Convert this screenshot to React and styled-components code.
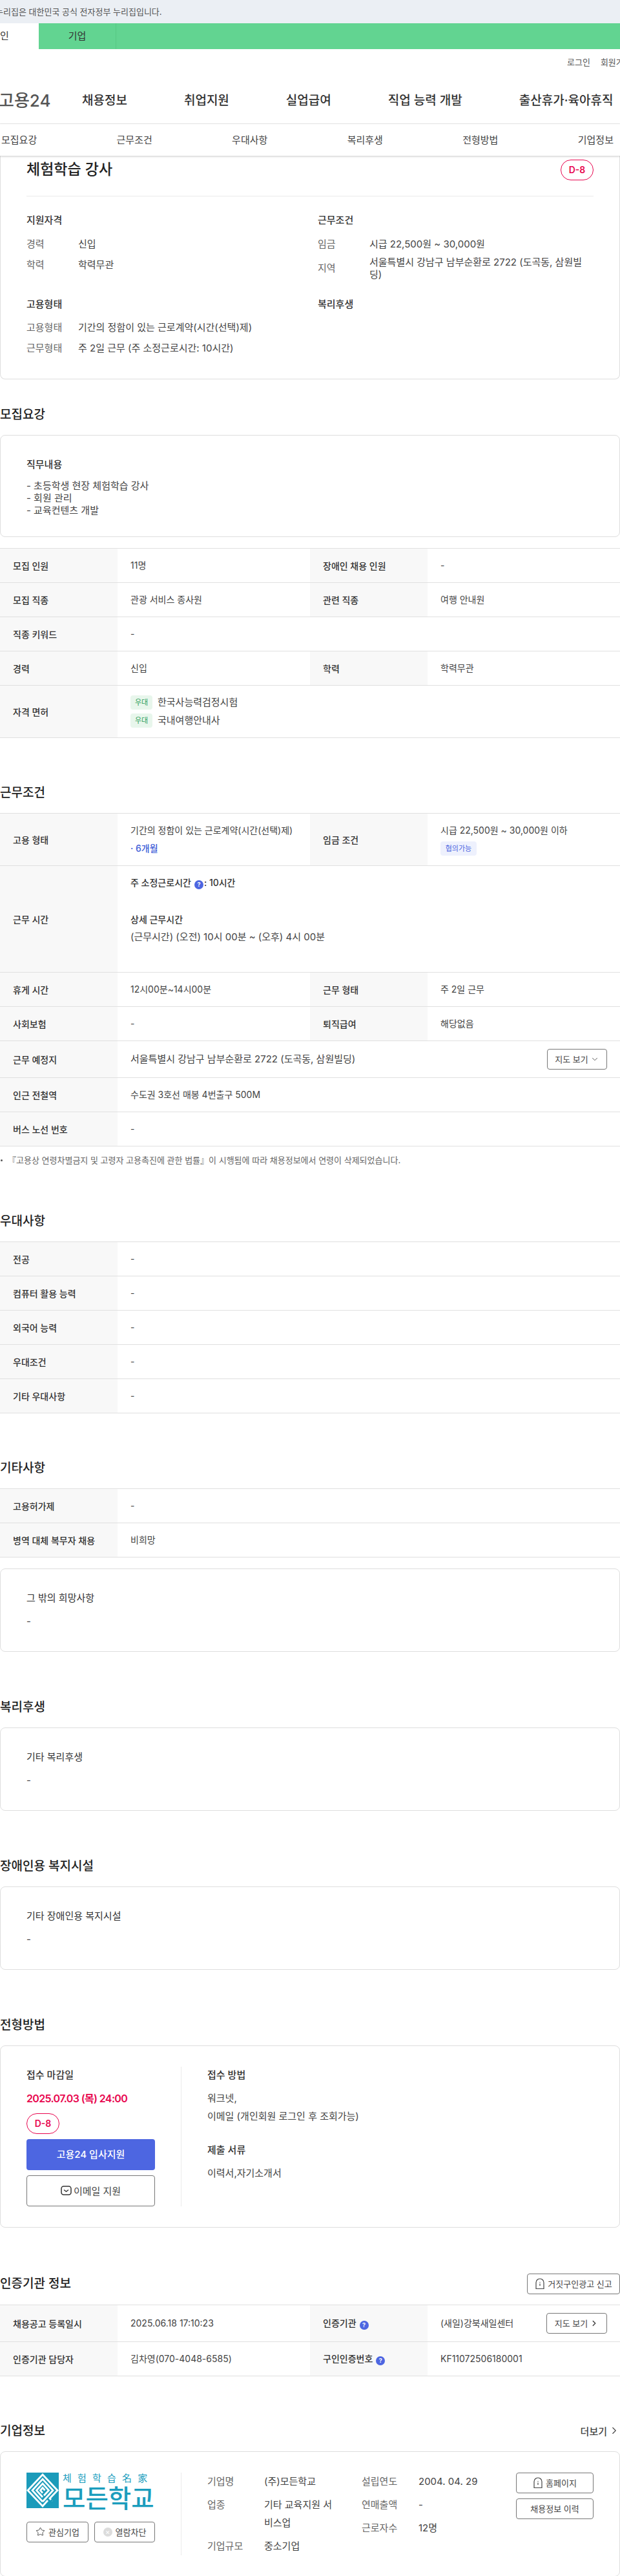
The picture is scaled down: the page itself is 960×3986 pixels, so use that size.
import React from 'react';
import styled, { createGlobalStyle } from 'styled-components';
import { ChevronDown, ChevronRight, Star } from 'lucide-react';

const GlobalStyle = createGlobalStyle`
  html, body {
    margin: 0;
    padding: 0;
    background: #fff;
  }
  body {
    font-family: Inter, "Noto Sans CJK KR", sans-serif;
    color: #444;
  }
  * { box-sizing: border-box; }
`;

const Page = styled.div`
  width: 960px;
  height: 3986px;
  overflow: hidden;
`;

const GovBanner = styled.div`
  height: 36px;
  line-height: 36px;
  background: #ebeff4;
  font-size: 13px;
  color: #555;
  white-space: nowrap;
  text-indent: -7px;
`;

const EnvBar = styled.div`
  display: flex;
  height: 40px;
  background: #62d491;
`;

const EnvTab = styled.div`
  width: 120px;
  margin-left: ${p => (p.$active ? '-60px' : '0')};
  background: ${p => (p.$active ? '#fff' : 'transparent')};
  border-right: ${p => (p.$active ? '0' : '1px solid #57c884')};
  color: #333;
  font-size: 15px;
  line-height: 40px;
  text-align: center;
`;

const UtilRow = styled.div`
  display: flex;
  gap: 16px;
  height: 40px;
  padding: 10px 0 0 878px;
  font-size: 13px;
  line-height: 20px;
  color: #555;
  white-space: nowrap;
`;

const MainNav = styled.div`
  display: flex;
  align-items: center;
  height: 76px;
  border-bottom: 1px solid #ececec;
  white-space: nowrap;
`;

const Logo = styled.div`
  width: 127px;
  margin: 0 2px 0 -2px;
  flex: none;
  font-size: 26px;
  font-weight: 500;
  color: #555;
`;

const NavItems = styled.div`
  display: flex;
  gap: 88px;
`;

const NavItem = styled.div`
  font-size: 19px;
  font-weight: 500;
  color: #333;
`;

const SubTabs = styled.div`
  position: relative;
  z-index: 2;
  display: flex;
  justify-content: space-between;
  height: 49px;
  padding: 0 10px 0 2px;
  background: #fff;
  box-shadow: 0 1px 3px rgba(0, 0, 0, 0.22);
  font-size: 15px;
  line-height: 49px;
  color: #444;
`;

const Card = styled.div`
  border: 1px solid #dedede;
  border-radius: 8px;
  background: #fff;
  margin-top: ${p => p.$top || 0}px;
`;

const SummaryCard = styled(Card)`
  border-top: 0;
  border-radius: 0 0 8px 8px;
  height: 346px;
  padding: 6px 40px 0;
`;

const TitleRow = styled.div`
  display: flex;
  justify-content: space-between;
  align-items: flex-start;
  height: 57px;
  border-bottom: 1px solid #ebebeb;
`;

const JobTitle = styled.h1`
  margin: 0;
  font-size: 23px;
  line-height: 30px;
  font-weight: 500;
  color: #222;
`;

const DdayBadge = styled.div`
  width: 51px;
  height: 32px;
  border: 1px solid #e8064f;
  border-radius: 16px;
  color: #e8064f;
  font-size: 14px;
  font-weight: 600;
  line-height: 30px;
  text-align: center;
`;

const SummaryGrid = styled.div`
  display: grid;
  grid-template-columns: 451px 427px;
  row-gap: 26px;
  padding-top: 27px;
`;

const GroupTitle = styled.div`
  font-size: 15px;
  line-height: 20px;
  font-weight: 500;
  color: #333;
  margin-bottom: 14px;
`;

const SummaryRows = styled.div`
  display: flex;
  flex-direction: column;
  gap: 6px;
`;

const SummaryRow = styled.div`
  display: flex;
  align-items: center;
  min-height: 26px;
  font-size: 15px;
  line-height: 18.75px;
`;

const SummaryLabel = styled.div`
  width: 80px;
  flex: none;
  color: #666;
`;

const SummaryValue = styled.div`
  flex: 1;
  color: #444;
`;

const SectionHead = styled.div`
  display: flex;
  justify-content: space-between;
  align-items: center;
  margin-top: ${p => p.$top}px;
  margin-bottom: ${p => p.$bottom || 18}px;
  min-height: 27px;
`;

const SectionTitle = styled.h2`
  margin: 0;
  font-size: 19px;
  line-height: 27px;
  font-weight: 500;
  color: #222;
`;

const DetailCard = styled(Card)`
  padding: 35px 40px ${p => (p.$tight ? 31 : 36)}px;
`;

const DetailHeading = styled.div`
  font-size: 15px;
  line-height: 20px;
  font-weight: ${p => (p.$strong ? 500 : 400)};
  color: #333;
`;

const DetailBody = styled.div`
  margin-top: ${p => (p.$tight ? 14 : 17)}px;
  font-size: 15px;
  line-height: 18.75px;
  color: #444;
  white-space: pre-line;
`;

const Table = styled.table`
  width: 960px;
  table-layout: fixed;
  border-collapse: collapse;
  border-top: 1px solid #e0e0e0;
  font-size: 14px;
  margin-top: ${p => p.$top || 0}px;
`;

const Th = styled.th`
  padding: 0 20px;
  background: #f8f8f8;
  font-weight: 500;
  color: #333;
  text-align: left;
  border-bottom: 1px solid #e0e0e0;
`;

const Td = styled.td`
  padding: 0 20px;
  color: #444;
  line-height: 20px;
  border-bottom: 1px solid #e0e0e0;
`;

const Tr = styled.tr`
  height: ${p => p.$h || 53}px;
`;

const ColHead = styled.col`
  width: 182px;
`;

const ColBody = styled.col`
  width: 298px;
`;

const Licence = styled.div`
  display: flex;
  align-items: center;
  gap: 8px;
  height: 22px;
  font-size: 15px;
  & + & {
    margin-top: 6px;
  }
`;

const GreenTag = styled.span`
  width: 34px;
  height: 22px;
  border-radius: 4px;
  background: #e8f6ec;
  color: #2f9e5a;
  font-size: 11px;
  line-height: 22px;
  text-align: center;
`;

const CellLine = styled.div`
  font-size: ${p => p.$size || 14}px;
  line-height: 20px;
  margin-top: ${p => p.$top || 0}px;
  margin-bottom: ${p => p.$bottom || 0}px;
`;

const PeriodLine = styled.div`
  margin-top: 8px;
  font-size: 14px;
  font-weight: 500;
  color: #4160d8;
`;

const BlueTag = styled.span`
  display: inline-block;
  margin-top: 7px;
  width: 56px;
  height: 22px;
  border-radius: 4px;
  background: #eef1fd;
  color: #4d66e1;
  font-size: 11px;
  line-height: 22px;
  text-align: center;
`;

const HelpDot = styled.span`
  display: inline-block;
  width: 14px;
  height: 14px;
  margin: 0 1px 0 5px;
  border-radius: 50%;
  background: #4d66e1;
  color: #fff;
  font-size: 9px;
  font-weight: 700;
  line-height: 14px;
  text-align: center;
  vertical-align: -1px;
`;

const StrongLine = styled.div`
  font-weight: 500;
  color: #333;
  line-height: 20px;
  margin-top: ${p => p.$top || 0}px;
`;

const BetweenCell = styled.div`
  display: flex;
  justify-content: space-between;
  align-items: center;
  font-size: ${p => p.$size || 14}px;
`;

const OutlineButton = styled.div`
  display: inline-flex;
  align-items: center;
  justify-content: center;
  gap: ${p => p.$gap || 3}px;
  flex: none;
  width: ${p => p.$w}px;
  height: 32px;
  border: 1px solid #777;
  border-radius: 4px;
  background: #fff;
  color: #444;
  font-size: 13px;
  white-space: nowrap;
`;

const NoteLine = styled.div`
  position: relative;
  margin-top: 11px;
  padding-left: 12px;
  font-size: 13px;
  line-height: 20px;
  color: #666;
  &::before {
    content: '';
    position: absolute;
    left: 1px;
    top: 9px;
    width: 3px;
    height: 3px;
    border-radius: 50%;
    background: #555;
  }
`;

const ApplyCard = styled(Card)`
  display: flex;
  height: 282px;
  padding: 32px 40px 0;
`;

const DeadlineCol = styled.div`
  width: 199px;
  padding-top: 3px;
`;

const Divider = styled.div`
  width: 1px;
  height: ${p => p.$h}px;
  margin: 0 40px;
  background: #ebebeb;
  flex: none;
`;

const ColHeading = styled.div`
  font-size: 15px;
  font-weight: 500;
  line-height: 20px;
  color: #333;
  margin-top: ${p => p.$top || 0}px;
`;

const DeadlineDate = styled.div`
  margin-top: 16px;
  margin-bottom: 13px;
  font-size: 16px;
  font-weight: 600;
  line-height: 20px;
  color: #e8064f;
  letter-spacing: -0.04em;
  white-space: nowrap;
`;

const ApplyButton = styled.div`
  height: 48px;
  margin-top: 8px;
  border-radius: 4px;
  background: #4d66e1;
  color: #fff;
  font-size: 15px;
  font-weight: 500;
  line-height: 48px;
  text-align: center;
`;

const EmailButton = styled.div`
  display: flex;
  align-items: center;
  justify-content: center;
  gap: 3px;
  height: 48px;
  margin-top: 8px;
  border: 1px solid #777;
  border-radius: 4px;
  color: #444;
  font-size: 15px;
`;

const MethodCol = styled.div`
  padding-top: 3px;
  flex: 1;
`;

const MethodText = styled.div`
  margin-top: 12px;
  font-size: 15px;
  line-height: 28px;
  color: #444;
  white-space: pre-line;
`;

const MoreLink = styled.div`
  display: flex;
  align-items: center;
  gap: 2px;
  font-size: 15px;
  font-weight: 500;
  color: #444;
`;

const CompanyCard = styled(Card)`
  display: flex;
  height: 194px;
  padding: 32px 40px 0;
`;

const LogoCol = styled.div`
  width: 199px;
  flex: none;
`;

const LogoRow = styled.div`
  display: flex;
  gap: 6px;
  height: 63px;
`;

const LogoWords = styled.div`
  display: flex;
  flex-direction: column;
  color: #1b9dbd;
  white-space: nowrap;
`;

const LogoSlogan = styled.div`
  font-size: 15px;
  line-height: 17px;
  letter-spacing: 9.2px;
`;

const LogoName = styled.div`
  font-size: 38.5px;
  line-height: 46px;
  font-weight: 500;
`;

const FavRow = styled.div`
  display: flex;
  justify-content: space-between;
  margin-top: 13px;
`;

const BlockIcon = styled.span`
  width: 14px;
  height: 14px;
  border-radius: 50%;
  background: #dcdcdc;
  color: #fff;
  font-size: 11px;
  line-height: 14px;
  text-align: center;
`;

const InfoCols = styled.div`
  display: flex;
  width: 478px;
`;

const InfoCol = styled.div`
  display: flex;
  flex-direction: column;
  gap: 8px;
  width: ${p => p.$w}px;
  flex: none;
`;

const InfoItem = styled.div`
  display: flex;
  font-size: 15px;
  line-height: 28px;
`;

const InfoLabel = styled.div`
  width: 88px;
  flex: none;
  color: #666;
`;

const InfoValue = styled.div`
  width: 115px;
  color: #444;
`;

const SideButtons = styled.div`
  display: flex;
  flex-direction: column;
  gap: 8px;
`;

const BadgeIcon = () => (
  <svg width="16" height="18" viewBox="0 0 16 18" fill="none" stroke="#444" strokeWidth="1.2">
    <path d="M2 16.5V7a6 6 0 0 1 12 0v9.5Z" />
    <path d="M8 8.5v3.5" />
    <path d="M8 6v1" />
  </svg>
);

const EmailIcon = () => (
  <svg width="17" height="15" viewBox="0 0 17 15" fill="none" stroke="#333" strokeWidth="1.5">
    <rect x="1" y="1" width="15" height="13" rx="3.5" />
    <path d="M5 6.5l3.5 2.5 3.5-2.5" />
  </svg>
);

const LogoMark = () => (
  <svg width="50" height="55" viewBox="0 0 50 55">
    <rect width="50" height="55" fill="#1b9bba" />
    <path
      d="M33 43 L25 52 L2 27.5 L25 3 L48 27.5 L36 40 L40 44
         M25 45 L9 27.5 L25 10 L41 27.5 L25 45
         M25 38 L15.5 27.5 L25 17 L34.5 27.5 L27 35.5
         M25 31.5 L21.5 27.5 L25 23.5 L28.5 27.5"
      fill="none"
      stroke="#fff"
      strokeWidth="2.8"
    />
    <path d="M36 46 L43 39" stroke="#1b9bba" strokeWidth="3" />
  </svg>
);

const navItems = ['채용정보', '취업지원', '실업급여', '직업 능력 개발', '출산휴가·육아휴직'];
const tabs = ['모집요강', '근무조건', '우대사항', '복리후생', '전형방법', '기업정보'];

const TableCols = () => (
  <colgroup>
    <ColHead />
    <ColBody />
    <ColHead />
    <ColBody />
  </colgroup>
);

const SummaryBlock = ({ title, rows }) => (
  <div>
    <GroupTitle>{title}</GroupTitle>
    <SummaryRows>
      {rows.map(([label, value]) => (
        <SummaryRow key={label}>
          <SummaryLabel>{label}</SummaryLabel>
          <SummaryValue>{value}</SummaryValue>
        </SummaryRow>
      ))}
    </SummaryRows>
  </div>
);

const SimpleTable = ({ rows }) => (
  <Table>
    <TableCols />
    <tbody>
      {rows.map(([label, value]) => (
        <Tr key={label}>
          <Th>{label}</Th>
          <Td colSpan={3}>{value}</Td>
        </Tr>
      ))}
    </tbody>
  </Table>
);

export default function App() {
  return (
    <Page>
      <GlobalStyle />
      <GovBanner>누리집은 대한민국 공식 전자정부 누리집입니다.</GovBanner>
      <EnvBar>
        <EnvTab $active>개인</EnvTab>
        <EnvTab>기업</EnvTab>
      </EnvBar>
      <UtilRow>
        <span>로그인</span>
        <span>회원가입</span>
      </UtilRow>
      <MainNav>
        <Logo>고용24</Logo>
        <NavItems>
          {navItems.map(item => (
            <NavItem key={item}>{item}</NavItem>
          ))}
        </NavItems>
      </MainNav>
      <SubTabs>
        {tabs.map(tab => (
          <span key={tab}>{tab}</span>
        ))}
      </SubTabs>

      <SummaryCard>
        <TitleRow>
          <JobTitle>체험학습 강사</JobTitle>
          <DdayBadge>D-8</DdayBadge>
        </TitleRow>
        <SummaryGrid>
          <SummaryBlock title="지원자격" rows={[['경력', '신입'], ['학력', '학력무관']]} />
          <SummaryBlock
            title="근무조건"
            rows={[
              ['임금', '시급 22,500원 ~ 30,000원'],
              ['지역', '서울특별시 강남구 남부순환로 2722 (도곡동, 삼원빌딩)'],
            ]}
          />
          <SummaryBlock
            title="고용형태"
            rows={[
              ['고용형태', '기간의 정함이 있는 근로계약(시간(선택)제)'],
              ['근무형태', '주 2일 근무 (주 소정근로시간: 10시간)'],
            ]}
          />
          <SummaryBlock title="복리후생" rows={[]} />
        </SummaryGrid>
      </SummaryCard>

      <SectionHead $top={41}>
        <SectionTitle>모집요강</SectionTitle>
      </SectionHead>
      <DetailCard $tight>
        <DetailHeading $strong>직무내용</DetailHeading>
        <DetailBody $tight>{'- 초등학생 현장 체험학습 강사\n- 회원 관리\n- 교육컨텐츠 개발'}</DetailBody>
      </DetailCard>

      <Table $top={17}>
        <TableCols />
        <tbody>
          <Tr>
            <Th>모집 인원</Th>
            <Td>11명</Td>
            <Th>장애인 채용 인원</Th>
            <Td>-</Td>
          </Tr>
          <Tr>
            <Th>모집 직종</Th>
            <Td>관광 서비스 종사원</Td>
            <Th>관련 직종</Th>
            <Td>여행 안내원</Td>
          </Tr>
          <Tr>
            <Th>직종 키워드</Th>
            <Td colSpan={3}>-</Td>
          </Tr>
          <Tr>
            <Th>경력</Th>
            <Td>신입</Td>
            <Th>학력</Th>
            <Td>학력무관</Td>
          </Tr>
          <Tr $h={81}>
            <Th>자격 면허</Th>
            <Td colSpan={3}>
              <Licence>
                <GreenTag>우대</GreenTag>
                한국사능력검정시험
              </Licence>
              <Licence>
                <GreenTag>우대</GreenTag>
                국내여행안내사
              </Licence>
            </Td>
          </Tr>
        </tbody>
      </Table>

      <SectionHead $top={71}>
        <SectionTitle>근무조건</SectionTitle>
      </SectionHead>
      <Table>
        <TableCols />
        <tbody>
          <Tr $h={81}>
            <Th>고용 형태</Th>
            <Td>
              <CellLine>기간의 정함이 있는 근로계약(시간(선택)제)</CellLine>
              <PeriodLine>· 6개월</PeriodLine>
            </Td>
            <Th>임금 조건</Th>
            <Td>
              <CellLine>시급 22,500원 ~ 30,000원 이하</CellLine>
              <BlueTag>협의가능</BlueTag>
            </Td>
          </Tr>
          <Tr $h={165}>
            <Th>근무 시간</Th>
            <Td colSpan={3}>
              <StrongLine>
                주 소정근로시간<HelpDot>?</HelpDot>: 10시간
              </StrongLine>
              <StrongLine $top={37}>상세 근무시간</StrongLine>
              <CellLine $size={15} $top={7} $bottom={28}>(근무시간) (오전) 10시 00분 ~ (오후) 4시 00분</CellLine>
            </Td>
          </Tr>
          <Tr>
            <Th>휴게 시간</Th>
            <Td>12시00분~14시00분</Td>
            <Th>근무 형태</Th>
            <Td>주 2일 근무</Td>
          </Tr>
          <Tr>
            <Th>사회보험</Th>
            <Td>-</Td>
            <Th>퇴직급여</Th>
            <Td>해당없음</Td>
          </Tr>
          <Tr $h={57}>
            <Th>근무 예정지</Th>
            <Td colSpan={3}>
              <BetweenCell $size={15}>
                <span>서울특별시 강남구 남부순환로 2722 (도곡동, 삼원빌딩)</span>
                <OutlineButton $w={93}>
                  지도 보기 <ChevronDown size={14} strokeWidth={1.5} />
                </OutlineButton>
              </BetweenCell>
            </Td>
          </Tr>
          <Tr>
            <Th>인근 전철역</Th>
            <Td colSpan={3}>수도권 3호선 매봉 4번출구 500M</Td>
          </Tr>
          <Tr>
            <Th>버스 노선 번호</Th>
            <Td colSpan={3}>-</Td>
          </Tr>
        </tbody>
      </Table>
      <NoteLine>『고용상 연령차별금지 및 고령자 고용촉진에 관한 법률』이 시행됨에 따라 채용정보에서 연령이 삭제되었습니다.</NoteLine>

      <SectionHead $top={71}>
        <SectionTitle>우대사항</SectionTitle>
      </SectionHead>
      <SimpleTable
        rows={[
          ['전공', '-'],
          ['컴퓨터 활용 능력', '-'],
          ['외국어 능력', '-'],
          ['우대조건', '-'],
          ['기타 우대사항', '-'],
        ]}
      />

      <SectionHead $top={71}>
        <SectionTitle>기타사항</SectionTitle>
      </SectionHead>
      <SimpleTable rows={[['고용허가제', '-'], ['병역 대체 복무자 채용', '비희망']]} />
      <DetailCard $top={17}>
        <DetailHeading>그 밖의 희망사항</DetailHeading>
        <DetailBody>-</DetailBody>
      </DetailCard>

      <SectionHead $top={72}>
        <SectionTitle>복리후생</SectionTitle>
      </SectionHead>
      <DetailCard>
        <DetailHeading>기타 복리후생</DetailHeading>
        <DetailBody>-</DetailBody>
      </DetailCard>

      <SectionHead $top={72}>
        <SectionTitle>장애인용 복지시설</SectionTitle>
      </SectionHead>
      <DetailCard>
        <DetailHeading>기타 장애인용 복지시설</DetailHeading>
        <DetailBody>-</DetailBody>
      </DetailCard>

      <SectionHead $top={72}>
        <SectionTitle>전형방법</SectionTitle>
      </SectionHead>
      <ApplyCard>
        <DeadlineCol>
          <ColHeading>접수 마감일</ColHeading>
          <DeadlineDate>2025.07.03 (목) 24:00</DeadlineDate>
          <DdayBadge>D-8</DdayBadge>
          <ApplyButton>고용24 입사지원</ApplyButton>
          <EmailButton>
            <EmailIcon />
            이메일 지원
          </EmailButton>
        </DeadlineCol>
        <Divider $h={216} />
        <MethodCol>
          <ColHeading>접수 방법</ColHeading>
          <MethodText>{'워크넷,\n이메일 (개인회원 로그인 후 조회가능)'}</MethodText>
          <ColHeading $top={28}>제출 서류</ColHeading>
          <MethodText>이력서,자기소개서</MethodText>
        </MethodCol>
      </ApplyCard>

      <SectionHead $top={71} $bottom={16}>
        <SectionTitle>인증기관 정보</SectionTitle>
        <OutlineButton $w={144} $gap={4}>
          <BadgeIcon />
          거짓구인광고 신고
        </OutlineButton>
      </SectionHead>
      <Table>
        <TableCols />
        <tbody>
          <Tr $h={57}>
            <Th>채용공고 등록일시</Th>
            <Td>2025.06.18 17:10:23</Td>
            <Th>
              인증기관<HelpDot>?</HelpDot>
            </Th>
            <Td>
              <BetweenCell>
                <span>(새일)강북새일센터</span>
                <OutlineButton $w={94}>
                  지도 보기 <ChevronRight size={14} strokeWidth={2.5} />
                </OutlineButton>
              </BetweenCell>
            </Td>
          </Tr>
          <Tr>
            <Th>인증기관 담당자</Th>
            <Td>김차영(070-4048-6585)</Td>
            <Th>
              구인인증번호<HelpDot>?</HelpDot>
            </Th>
            <Td>KF11072506180001</Td>
          </Tr>
        </tbody>
      </Table>

      <SectionHead $top={71}>
        <SectionTitle>기업정보</SectionTitle>
        <MoreLink>
          더보기 <ChevronRight size={18} strokeWidth={1.5} />
        </MoreLink>
      </SectionHead>
      <CompanyCard>
        <LogoCol>
          <LogoRow>
            <LogoMark />
            <LogoWords>
              <LogoSlogan>체험학습名家</LogoSlogan>
              <LogoName>모든학교</LogoName>
            </LogoWords>
          </LogoRow>
          <FavRow>
            <OutlineButton $w={96} $gap={5}>
              <Star size={15} strokeWidth={1.5} />
              관심기업
            </OutlineButton>
            <OutlineButton $w={94} $gap={5}>
              <BlockIcon>×</BlockIcon>
              열람차단
            </OutlineButton>
          </FavRow>
        </LogoCol>
        <Divider $h={128} />
        <InfoCols>
          <InfoCol $w={239}>
            <InfoItem>
              <InfoLabel>기업명</InfoLabel>
              <InfoValue>(주)모든학교</InfoValue>
            </InfoItem>
            <InfoItem>
              <InfoLabel>업종</InfoLabel>
              <InfoValue>기타 교육지원 서비스업</InfoValue>
            </InfoItem>
            <InfoItem>
              <InfoLabel>기업규모</InfoLabel>
              <InfoValue>중소기업</InfoValue>
            </InfoItem>
          </InfoCol>
          <InfoCol $w={239}>
            <InfoItem>
              <InfoLabel>설립연도</InfoLabel>
              <InfoValue>2004. 04. 29</InfoValue>
            </InfoItem>
            <InfoItem>
              <InfoLabel>연매출액</InfoLabel>
              <InfoValue>-</InfoValue>
            </InfoItem>
            <InfoItem>
              <InfoLabel>근로자수</InfoLabel>
              <InfoValue>12명</InfoValue>
            </InfoItem>
          </InfoCol>
        </InfoCols>
        <SideButtons>
          <OutlineButton $w={120} $gap={4}>
            <BadgeIcon />
            홈페이지
          </OutlineButton>
          <OutlineButton $w={120}>채용정보 이력</OutlineButton>
        </SideButtons>
      </CompanyCard>
    </Page>
  );
}
